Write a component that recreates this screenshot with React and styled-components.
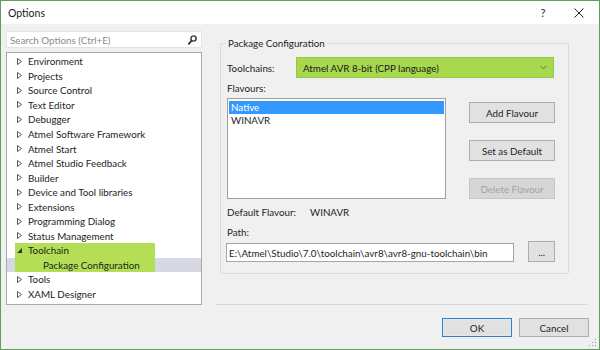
import React from 'react';
import styled, { createGlobalStyle } from 'styled-components';

const Global = createGlobalStyle`
  html, body { margin: 0; padding: 0; background: #f0f0f0; }
  body { font-family: "Lato", "Noto Sans", sans-serif; font-size: 9.8px; color: #1e1e1e; }
  * { box-sizing: border-box; }
`;

const Window = styled.div`
  position: relative;
  width: 600px;
  height: 350px;
  border: 1px solid #5f9e5b;
  background: #f0f0f0;
  display: flex;
  flex-direction: column;
  overflow: hidden;
`;

const TitleBar = styled.div`
  height: 23px;
  background: #ffffff;
  display: flex;
  align-items: center;
  padding-left: 7px;
  padding-right: 2px;
`;

const Title = styled.div`
  flex: 1;
  font-size: 10.5px;
  color: #1a1a1a;
`;

const TitleButton = styled.div`
  width: 36px;
  height: 23px;
  display: flex;
  align-items: center;
  justify-content: center;
  font-size: 11px;
  color: #222;
`;

const Main = styled.div`
  height: 281px;
  display: flex;
`;

const LeftColumn = styled.div`
  width: 196px;
  margin-left: 5px;
  padding-top: 7px;
  display: flex;
  flex-direction: column;
  gap: 4px;
`;

const SearchBox = styled.div`
  height: 17px;
  background: #ffffff;
  border: 1px solid #e3e3e3;
  display: flex;
  align-items: center;
  padding: 0 4px 0 3px;
  color: #8a8a8a;
`;

const SearchText = styled.span`
  flex: 1;
`;

const Tree = styled.div`
  flex: 1;
  background: #ffffff;
  border: 1px solid #a9a9a9;
  padding-top: 1px;
`;

const TreeRow = styled.div`
  height: 14.56px;
  display: flex;
  align-items: center;
  padding-left: ${p => (p.$child ? 36 : 10)}px;
  white-space: nowrap;
  color: #1e1e1e;
  background-color: ${p => (p.$selected ? '#d6d9e4' : 'transparent')};
  background-image: ${p => (p.$marked ? 'linear-gradient(#b4de55, #b4de55)' : 'none')};
  background-size: 140px 100%;
  background-position: 8px 0;
  background-repeat: no-repeat;
`;

const Arrow = styled.span`
  width: 11px;
  display: inline-flex;
  align-items: center;
`;

const RightColumn = styled.div`
  width: 371px;
  margin-left: 14px;
  border-bottom: 1px solid #d6d6d6;
  padding-top: 19px;
  padding-left: 4px;
`;

const GroupBox = styled.div`
  position: relative;
  width: 349px;
  height: 231px;
  border: 1px solid #dadada;
  border-radius: 2px;
  padding: 13px 13px 0 6px;
`;

const Legend = styled.div`
  position: absolute;
  top: -8px;
  left: 5px;
  padding: 0 2px;
  background: #f0f0f0;
  line-height: 14px;
`;

const FieldRow = styled.div`
  display: flex;
  align-items: center;
  margin-top: ${p => p.$mt || 0}px;
`;

const Label = styled.div`
  width: ${p => p.$w || 'auto'};
  line-height: 14px;
  color: #1e1e1e;
  white-space: nowrap;
`;

const Dropdown = styled.div`
  width: 258px;
  height: 21px;
  background: #a8d84d;
  border: 1px solid #97c843;
  display: flex;
  align-items: center;
  padding: 0 6px 0 6px;
  color: #1a1a1a;
`;

const DropText = styled.span`
  flex: 1;
`;

const ListArea = styled.div`
  display: flex;
  margin-top: 3px;
  gap: 23px;
`;

const ListBox = styled.div`
  width: 225px;
  height: 101px;
  background: #ffffff;
  border: 1px solid #a0a0a0;
  padding: 2px 1px;
`;

const ListItem = styled.div`
  height: 13px;
  line-height: 13px;
  padding-left: 2px;
  color: ${p => (p.$selected ? '#ffffff' : '#1e1e1e')};
  background: ${p => (p.$selected ? '#3399ff' : 'transparent')};
`;

const ButtonColumn = styled.div`
  height: 101px;
  padding-top: 4px;
  display: flex;
  flex-direction: column;
  justify-content: space-between;
`;

const Button = styled.div`
  width: ${p => p.$w || 86}px;
  height: ${p => p.$h || 21}px;
  display: flex;
  align-items: center;
  justify-content: center;
  background: ${p => (p.$disabled ? '#d6d6d6' : '#e1e1e1')};
  color: ${p => (p.$disabled ? '#a3a3a3' : '#1e1e1e')};
  border: 1px solid ${p => (p.$primary ? '#3a7fc0' : p.$disabled ? '#c6c6c6' : '#adadad')};
  box-shadow: ${p => (p.$primary ? 'inset 0 0 0 1px #d9ebf9' : 'none')};
`;

const PathRow = styled.div`
  display: flex;
  align-items: flex-end;
  gap: 14px;
  margin-top: 2px;
  margin-left: -1px;
`;

const PathInput = styled.div`
  width: 292px;
  height: 19px;
  background: #ffffff;
  border: 1px solid #a5a5a5;
  display: flex;
  align-items: center;
  padding-left: 2px;
  color: #1e1e1e;
  white-space: nowrap;
  overflow: hidden;
`;

const Footer = styled.div`
  height: 44px;
  display: flex;
  justify-content: flex-end;
  align-items: flex-start;
  gap: 7px;
  padding: 13px 10px 0 0;
`;

const Grip = styled.svg`
  position: absolute;
  right: 2px;
  bottom: 2px;
`;

const Hollow = () => (
  <svg width="5" height="7" viewBox="0 0 5 7">
    <path d="M0.5 0.5 L4.5 3.5 L0.5 6.5 Z" fill="none" stroke="#555" strokeWidth="1" />
  </svg>
);

const Filled = () => (
  <svg width="5" height="7" viewBox="0 0 5 7">
    <path d="M0 6 L5 6 L5 1 Z" fill="#333" />
  </svg>
);

const tree = [
  { t: 'Environment' },
  { t: 'Projects' },
  { t: 'Source Control' },
  { t: 'Text Editor' },
  { t: 'Debugger' },
  { t: 'Atmel Software Framework' },
  { t: 'Atmel Start' },
  { t: 'Atmel Studio Feedback' },
  { t: 'Builder' },
  { t: 'Device and Tool libraries' },
  { t: 'Extensions' },
  { t: 'Programming Dialog' },
  { t: 'Status Management' },
  { t: 'Toolchain', open: true, marked: true },
  { t: 'Package Configuration', child: true, marked: true, selected: true },
  { t: 'Tools' },
  { t: 'XAML Designer' },
];

export default function App() {
  return (
    <>
      <Global />
      <Window>
        <TitleBar>
          <Title>Options</Title>
          <TitleButton>?</TitleButton>
          <TitleButton>
            <svg width="10" height="10" viewBox="0 0 10 10">
              <path d="M0.5 0.5 L9.5 9.5 M9.5 0.5 L0.5 9.5" stroke="#222" strokeWidth="1" />
            </svg>
          </TitleButton>
        </TitleBar>
        <Main>
          <LeftColumn>
            <SearchBox>
              <SearchText>Search Options (Ctrl+E)</SearchText>
              <svg width="9" height="10" viewBox="0 0 9 10">
                <circle cx="5.5" cy="3.5" r="2.6" fill="none" stroke="#333" strokeWidth="1.4" />
                <path d="M3.6 5.6 L0.8 8.8" stroke="#333" strokeWidth="1.8" strokeLinecap="round" />
              </svg>
            </SearchBox>
            <Tree>
              {tree.map(r => (
                <TreeRow key={r.t} $child={r.child} $marked={r.marked} $selected={r.selected}>
                  {!r.child && <Arrow>{r.open ? <Filled /> : <Hollow />}</Arrow>}
                  {r.t}
                </TreeRow>
              ))}
            </Tree>
          </LeftColumn>
          <RightColumn>
            <GroupBox>
              <Legend>Package Configuration</Legend>
              <FieldRow>
                <Label $w="69px">Toolchains:</Label>
                <Dropdown>
                  <DropText>Atmel AVR 8-bit (CPP language)</DropText>
                  <svg width="7" height="5" viewBox="0 0 7 5">
                    <path d="M0.5 0.8 L3.5 3.8 L6.5 0.8" fill="none" stroke="#666" strokeWidth="1" />
                  </svg>
                </Dropdown>
              </FieldRow>
              <FieldRow $mt={3}>
                <Label>Flavours:</Label>
              </FieldRow>
              <ListArea>
                <ListBox>
                  <ListItem $selected>Native</ListItem>
                  <ListItem>WINAVR</ListItem>
                </ListBox>
                <ButtonColumn>
                  <Button>Add Flavour</Button>
                  <Button>Set as Default</Button>
                  <Button $disabled>Delete Flavour</Button>
                </ButtonColumn>
              </ListArea>
              <FieldRow $mt={6}>
                <Label $w="83px">Default Flavour:</Label>
                <Label>WINAVR</Label>
              </FieldRow>
              <FieldRow $mt={6}>
                <Label>Path:</Label>
              </FieldRow>
              <PathRow>
                <PathInput>E:\Atmel\Studio\7.0\toolchain\avr8\avr8-gnu-toolchain\bin</PathInput>
                <Button $w={27}>...</Button>
              </PathRow>
            </GroupBox>
          </RightColumn>
        </Main>
        <Footer>
          <Button $w={70} $h={19} $primary>OK</Button>
          <Button $w={70} $h={19}>Cancel</Button>
        </Footer>
        <Grip width="8" height="8" viewBox="0 0 8 8">
          <rect x="6" y="0" width="1" height="1" fill="#999" />
          <rect x="3" y="3" width="1" height="1" fill="#999" />
          <rect x="6" y="3" width="1" height="1" fill="#999" />
          <rect x="0" y="6" width="1" height="1" fill="#999" />
          <rect x="3" y="6" width="1" height="1" fill="#999" />
          <rect x="6" y="6" width="1" height="1" fill="#999" />
        </Grip>
      </Window>
    </>
  );
}
